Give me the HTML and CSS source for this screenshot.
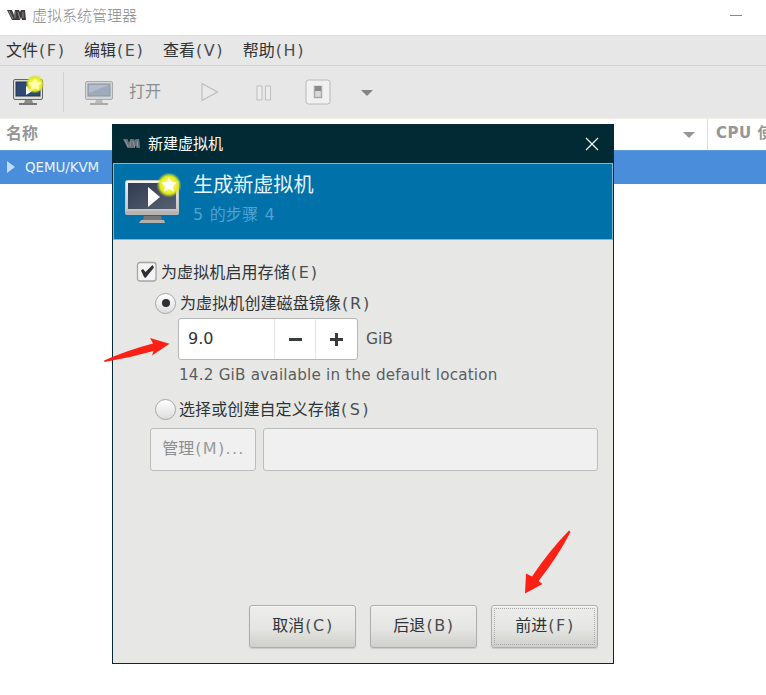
FILE: index.html
```html
<!DOCTYPE html>
<html lang="zh-CN">
<head>
<meta charset="utf-8">
<title>虚拟系统管理器</title>
<link rel="stylesheet" href="styles.css">
</head>
<body>
<svg class="defs" width="0" height="0">
  <defs>
    <linearGradient id="screen" x1="0" y1="0" x2="1" y2="1"><stop offset="0" stop-color="#303b4f"/><stop offset="1" stop-color="#566174"/></linearGradient>
    <linearGradient id="bezel" x1="0" y1="0" x2="0" y2="1"><stop offset="0" stop-color="#f5f5f3"/><stop offset="1" stop-color="#bcbcba"/></linearGradient>
    <radialGradient id="glow"><stop offset=".35" stop-color="#fff850"/><stop offset=".72" stop-color="#e0e91b"/><stop offset="1" stop-color="#c8dc20" stop-opacity="0"/></radialGradient>
    <symbol id="vmm" viewBox="0 0 20 12"><path d="M0 1h5l2 5 1-5h4l1 2 1-2h4l1 10h-4l-1-3-1 3H5z" fill="currentColor"/><path d="M2 2l4 8M8 3v6M11 3l2 7M16 3v6" stroke="#aaa4a4" stroke-width=".8" fill="none"/></symbol>
  </defs>
</svg>
<div class="window">
  <header class="titlebar"><svg class="logo" width="20" height="12"><use href="#vmm"/></svg><span class="title">虚拟系统管理器</span><i class="minimize"></i></header>
  <nav class="menubar">
    <span>文件<b>(F)</b></span><span>编辑<b>(E)</b></span><span>查看<b>(V)</b></span><span>帮助<b>(H)</b></span>
  </nav>
  <div class="toolbar">
    <svg class="tool-new" width="34" height="32" viewBox="0 0 34 32">
      <rect x="1.500" y="5.500" width="29" height="20" rx="1.500" fill="#deded9" stroke="#666"/><rect x="4" y="8" width="24" height="14" fill="#2e4a73" stroke="#27364e"/>
      <path d="M13 26h7l1 3H12z" fill="#8d8d8b"/><path d="M7 29h18v2H7z" fill="#777"/>
      <path d="M14 12l8 4-8 5z" fill="#fff"/><circle cx="23" cy="10" r="9.500" fill="url(#glow)"/><path d="M23 4l2 4 5 .5-3.500 3.200 1 4.700-4.500-2.200-4.500 2.200 1-4.700L16 8.500l5-.5z" fill="#fffdb0"/>
    </svg>
    <i class="separator"></i>
    <svg class="tool-open" width="30" height="26" viewBox="0 0 30 26"><rect x="1.500" y="1.500" width="27" height="18" rx="1.500" fill="#d5d5d5" stroke="#aaa"/><rect x="4" y="4" width="22" height="12" fill="#9eabbb" stroke="#8b97a8"/><path d="M5 5h20L5 13z" fill="#b4beca"/><path d="M12 20h6l1 3h-8z" fill="#bbb"/><path d="M6 23h18v2H6z" fill="#aaa"/></svg>
    <span class="open-label">打开</span>
    <svg class="tool-run" width="20" height="22" viewBox="0 0 20 22"><path d="M2 2.500v17L17.500 11z" fill="#e9e9e9" stroke="#bdbdbd" stroke-width="1.200"/></svg>
    <svg class="tool-pause" width="18" height="18" viewBox="0 0 18 18"><path d="M2 2h5v14H2zM10.500 2h5v14h-5z" fill="#ededed" stroke="#bdbdbd"/></svg>
    <svg class="tool-power" width="26" height="26" viewBox="0 0 26 26"><rect x="1" y="1" width="24" height="24" rx="2.500" fill="#f1f1f1" stroke="#b8b8b8"/><path d="M9.500 7.500h7v11h-7z" fill="#d8d8d8" stroke="#aaa" stroke-width="1.500"/><path d="M10 7h6v5h-6z" fill="#8a8a8a"/></svg>
    <i class="caret"></i>
  </div>
  <div class="columns"><span class="name-column">名称<i class="caret"></i></span><span class="cpu-column">CPU 使用率</span></div>
  <div class="connection"><i class="expander"></i><span>QEMU/KVM</span></div>
</div>

<section class="dialog">
  <header class="dialog-title"><svg class="dialog-logo" width="18" height="11"><use href="#vmm"/></svg><span>新建虚拟机</span>
    <svg class="close" width="14" height="14" viewBox="0 0 14 14"><path d="M1 1l12 12M13 1L1 13" stroke="#fff" stroke-width="1.200"/></svg>
  </header>
  <div class="banner">
    <svg width="60" height="54" viewBox="0 0 60 54">
      <rect x="3.500" y="8.500" width="53" height="34" rx="2" fill="url(#bezel)" stroke="#c8c8c5"/><path d="M3 39h54v2q0 2-2 2H5q-2 0-2-2z" fill="#b5b4b2"/>
      <rect x="6" y="11" width="48" height="26" fill="url(#screen)"/><path d="M22 44h17l1 4H21z" fill="#777"/><path d="M19 48h23l1 3H17z" fill="#b4b1ad"/>
      <path d="M26 15v20l12-10z" fill="#fff"/><circle cx="47" cy="13" r="12.500" fill="url(#glow)"/><path d="M47 5l2.300 5 5.500.6-4 3.700 1.200 5.400-5-2.700-5 2.700 1.200-5.400-4-3.700 5.500-.6z" fill="#fff"/>
    </svg>
    <div class="headings"><h1>生成新虚拟机</h1><p>5 的步骤 4</p></div>
  </div>
  <div class="content">
    <label class="option enable"><svg width="22" height="22" viewBox="0 0 22 22"><rect x="1.500" y="1.500" width="18.500" height="18.500" rx="2.500" fill="#f4f4f4" stroke="#a5a5a5" stroke-width="1.300"/><path d="M5 9.500l2-1.500 2.500 3 7-7 1.500 2.500L9.500 17 8 16z" fill="#2c3032"/></svg><span>为虚拟机启用存储<b>(E)</b></span></label>
    <label class="option create"><i class="radio checked"></i><span>为虚拟机创建磁盘镜像<b>(R)</b></span></label>
    <div class="size-row"><div class="spin"><span>9.0</span><i class="minus"></i><i class="plus"></i></div><span class="unit">GiB</span></div>
    <p class="available">14.2 GiB available in the default location</p>
    <label class="option custom"><i class="radio"></i><span>选择或创建自定义存储<b>(S)</b></span></label>
    <div class="path-row"><button class="manage">管理<b>(M)...</b></button><div class="path"></div></div>
    <footer class="actions"><button>取消<b>(C)</b></button><button>后退<b>(B)</b></button><button class="forward">前进<b>(F)</b></button></footer>
  </div>
</section>
<svg class="arrow arrow-size" width="68" height="26" viewBox="0 0 68 26"><path d="M0 23.500Q24 13 49 6.500L46 1l19.500 5.800L48 18.500l1.500-4.500Q25 21 .5 25z" fill="#fd2015"/></svg>
<svg class="arrow arrow-forward" width="50" height="66" viewBox="0 0 50 66"><path d="M45 .5Q25 21 8 46.500l-6-3-1 20L18.500 54l-4-3Q33 28 46.500 2z" fill="#fd2015"/></svg>
</body>
</html>
```
FILE: styles.css
```css
* { box-sizing: border-box; }
body { margin: 0; width: 766px; height: 695px; overflow: hidden; background: #fff; color: #2e3436; font: 16px/20px "DejaVu Sans", "Noto Sans CJK SC", sans-serif; }
b { font-weight: 400; letter-spacing: 1.600px; margin-left: 1px; margin-right: -1px; opacity: .85; }
i { flex: none; }
svg { flex: none; display: block; }
.defs { position: absolute; }
.titlebar { height: 35px; display: flex; align-items: center; padding: 0 24px 4px 7px; font: 300 15px/20px "Noto Sans CJK SC", sans-serif; color: #888; }
.logo { color: #403c3c; margin-top: -1px; }
.title { margin: -2px 0 0 5px; }
.minimize { width: 12px; height: 1px; background: #888; margin-left: auto; }
.menubar { height: 31px; padding-left: 6px; background: #e7e7e7; border-top: 1px solid #dedede; border-bottom: 1px solid #d2d2d2; display: flex; align-items: center; gap: 19.500px; white-space: nowrap; }
.toolbar { height: 53px; background: #e7e7e7; border-bottom: 1px solid #f0ece6; display: flex; align-items: center; padding: 0 0 1px 12px; }
.tool-new { margin-top: -3px; }
.separator { width: 1px; height: 40px; margin-left: 17px; background: #d2d2d2; }
.tool-open { margin-left: 20px; margin-top: 2px; }
.open-label { margin-left: 15px; color: #8c8f90; }
.tool-run { margin-left: 39px; }
.tool-pause { margin-left: 35px; margin-top: 2px; }
.tool-power { margin-left: 32px; }
.caret { border: 6px solid transparent; border-top-color: #858585; border-bottom: 0; }
.toolbar .caret { margin: 2px 0 0 30px; }
.columns { height: 31px; display: flex; color: #969696; font-weight: 700; white-space: nowrap; overflow: hidden; align-items: center; }
.name-column { width: 708px; height: 31px; flex: none; padding: 0 12px 2px 6px; border-right: 1px solid #dedede; display: flex; align-items: center; justify-content: space-between; }
.columns .caret { border-top-color: #969696; margin-top: 2px; }
.cpu-column { margin: -3px 0 0 8px; font-size: 15px; letter-spacing: .5px; }
.connection { height: 34px; border-top: 1px solid #5b9bd6; background: #4a8ddb; color: #e9f4ff; display: flex; align-items: center; padding: 0 0 1px 7px; font-size: 13.500px; letter-spacing: -.1px; }
.expander { border: 6px solid transparent; border-left: 8px solid #c0dcf7; border-right: 0; margin-right: 10px; }
.dialog { position: absolute; left: 112px; top: 124px; width: 502px; height: 540px; border: 1px solid #072b34; background: #e7e7e6; }
.dialog-title { height: 38px; background: #012a35; color: #fff; display: flex; align-items: center; padding: 0 14px 2px 10px; font: 15px/20px "Noto Sans CJK SC", sans-serif; }
.dialog-logo { color: #637079; margin-right: 7px; }
.close { margin: 2px 0 0 auto; }
.banner { height: 77px; padding: 8px 0 0 8px; display: flex; background: #0071a9; border: 1px solid #7ebad0; }
.headings { margin-left: 11px; padding-top: 1px; }
h1 { margin: 0; font-size: 20.100px; line-height: 24px; font-weight: 400; color: #e4f4fd; }
.headings p { margin: 8px 0 0; line-height: 20px; color: #4fa2d2; letter-spacing: .2px; word-spacing: 1px; }
.content { padding: 21px 15px 0 24px; }
.option { display: flex; height: 22px; align-items: center; white-space: nowrap; }
.option span { letter-spacing: .1px; padding-top: 1px; }
.option b { letter-spacing: 1.800px; }
.enable { margin-left: -1px; gap: 3px; }
.create { margin: 9px 0 0 18px; gap: 4px; }
.radio { width: 21px; height: 21px; border: 1.500px solid #a5a5a5; border-radius: 50%; background: linear-gradient(#fff, #ddd); display: grid; place-items: center; }
.checked::after { content: ""; width: 8px; height: 8px; border-radius: 50%; background: #2d3032; }
.size-row { display: flex; align-items: center; margin: 4px 0 0 41px; gap: 8px; }
.spin { width: 180px; height: 42px; display: grid; grid-template-columns: 95px 41px 1fr; background: #fff; border: 1px solid #b6b6b4; border-radius: 3px; }
.spin span { padding: 10px 0 0 9px; line-height: 20px; }
.spin i { border-left: 1px solid #e6e6e6; background: linear-gradient(#3a3d3e, #3a3d3e) center / 13px 3px no-repeat; }
.spin .plus { background: linear-gradient(#3a3d3e, #3a3d3e) center / 13px 3px no-repeat, linear-gradient(#3a3d3e, #3a3d3e) center / 3px 13px no-repeat; }
.unit { color: #555; font-size: 15.500px; }
.available { margin: 5px 0 0 42px; line-height: 20px; font-size: 15.200px; letter-spacing: .2px; color: #5b5e5f; white-space: nowrap; }
.custom { margin: 13px 0 0 18px; gap: 3px; }
.custom b { letter-spacing: 2.400px; }
.path-row { display: flex; gap: 7px; margin: 8px 0 0 13px; }
button { font: inherit; color: #2e3436; padding: 0 0 2px; border: 1px solid #adadab; border-radius: 3px; white-space: nowrap; }
.manage { width: 106px; height: 43px; background: #f0f0f0; color: #8b8e8f; border-color: #bcbcba; }
.manage b { letter-spacing: 1.300px; }
.path { flex: 1; background: #f0f0f0; border: 1px solid #bcbcba; border-radius: 3px; }
.actions { display: flex; justify-content: flex-end; gap: 14px; margin-top: 134px; }
.actions button { width: 107px; height: 43px; background: linear-gradient(#ededeb, #e5e5e3 55%, #cfcfcb); box-shadow: inset 0 1px #fafafa, 0 1px 1px #c9c9c7; }
.actions .forward { outline: 1px dotted #aaa; outline-offset: -4px; }
.arrow { position: absolute; }
.arrow-size { left: 104px; top: 337px; }
.arrow-forward { left: 524px; top: 530px; }
```
